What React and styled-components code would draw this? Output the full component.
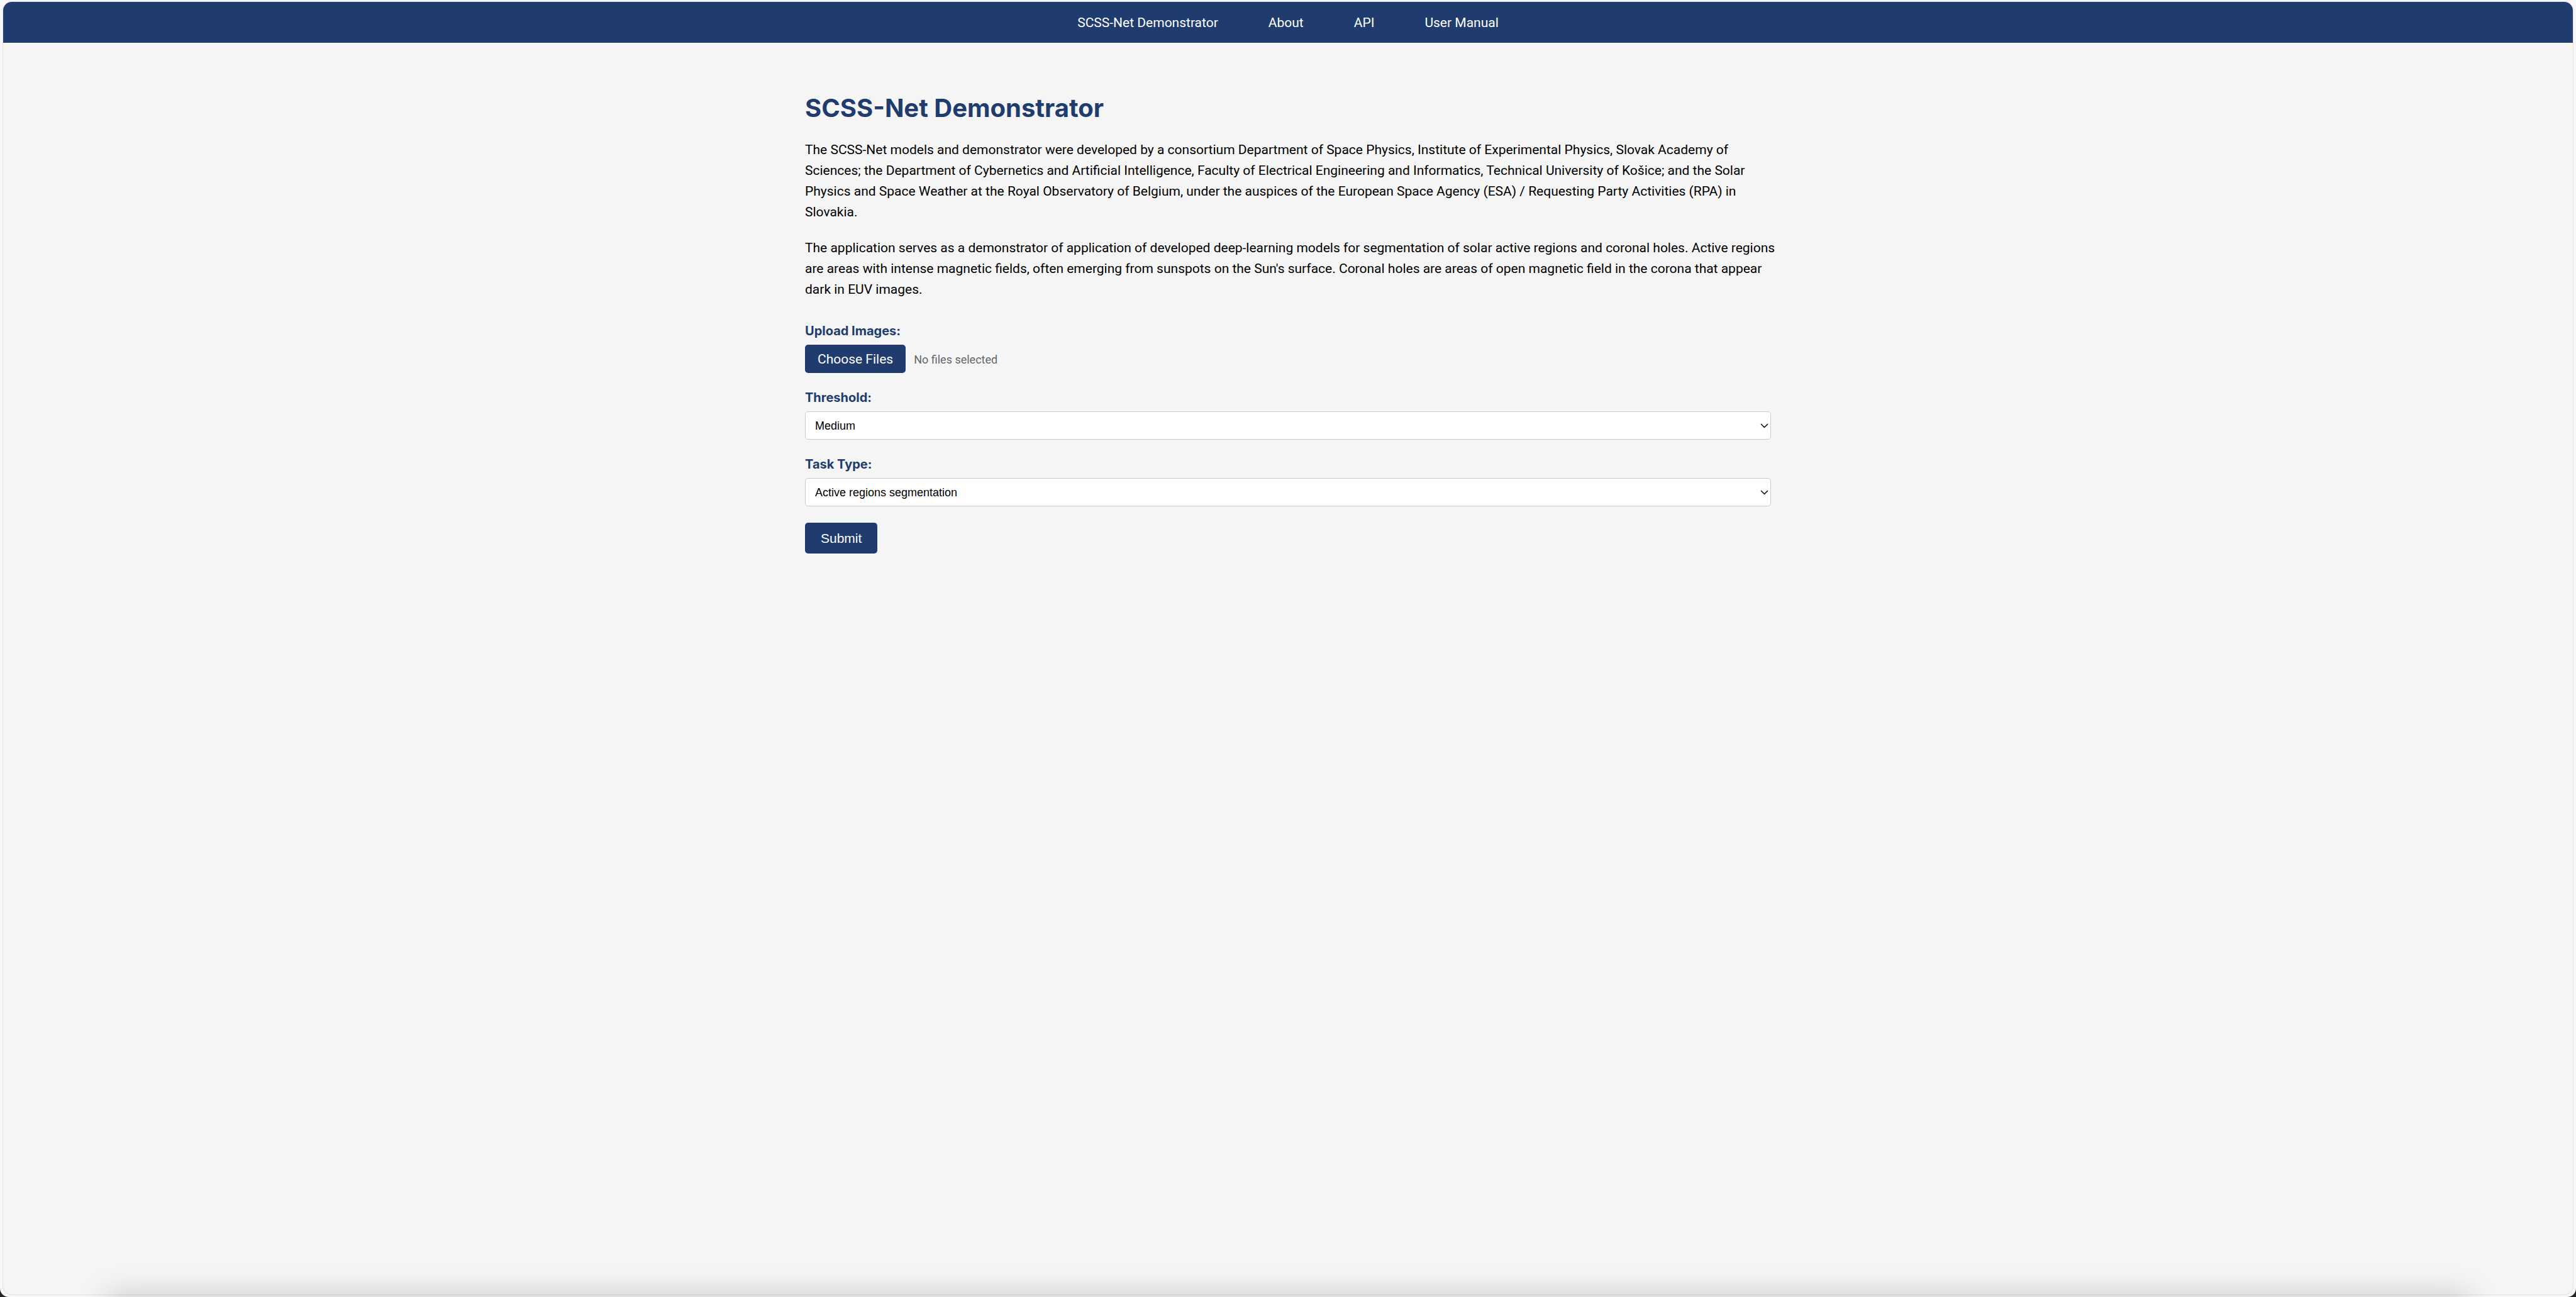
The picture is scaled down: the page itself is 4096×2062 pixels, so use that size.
import React, { useRef, useState } from "react";
import styled, { createGlobalStyle } from "styled-components";

const navy = "#203c6e";
const ui = '"Inter", "Liberation Sans", sans-serif';
const reading = 'Roboto, "Liberation Sans", sans-serif';
const control = '"Liberation Sans", Arial, sans-serif';

const GlobalStyle = createGlobalStyle`
  *, *::before, *::after { box-sizing: border-box; }
  body {
    margin: 0;
    background: #23291f;
    color: #000;
    font: 20px/33px ${ui};
  }
`;

const Frame = styled.div`
  display: flex;
  min-height: 100vh;
  padding: 3px 5px 4px;
  background: #f8f8f8;
  border-radius: 0 0 14px 14px;
  position: relative;
  overflow: hidden;
`;

const Page = styled.div`
  flex: 1;
  background: #f5f5f5;
  border-radius: 14px;
  box-shadow: 0 0 2px rgba(0, 0, 0, 0.28);
  overflow: hidden;
`;

const Nav = styled.nav`
  display: flex;
  justify-content: center;
  gap: 80px;
  padding: 17px 16px 15px;
  background: ${navy};
  font: 21px/33px ${reading};
`;

const NavLink = styled.a`
  color: #fff;
  text-decoration: none;
`;

const Main = styled.main`
  width: 37.5vw;
  margin: 0 auto;
  padding-top: 78px;
`;

const Title = styled.h1`
  margin: 0 0 24px;
  color: ${navy};
  font-size: 40px;
  line-height: 52px;
  font-weight: 700;
`;

const Paragraph = styled.p`
  margin: 0 -10px 24px 0;
  font: 21px/33px ${reading};
`;

const Form = styled.form`
  display: flex;
  flex-direction: column;
  align-items: stretch;
  gap: 26px;
  padding-top: 12px;
`;

const Field = styled.div`
  display: flex;
  flex-direction: column;
`;

const Label = styled.label`
  color: ${navy};
  font-weight: 700;
  margin-bottom: 8px;
  line-height: 27px;
`;

const FileRow = styled.div`
  display: flex;
  align-items: center;
  gap: 13px;
`;

const HiddenFile = styled.input`
  display: none;
`;

const Button = styled.button`
  align-self: flex-start;
  padding: ${(p) => (p.$large ? "13px 25px" : "12px 20px 10px")};
  border: 0;
  border-radius: 5px;
  background: ${navy};
  color: #fff;
  font: 21px/23px ${(p) => (p.$large ? control : reading)};
  cursor: pointer;
`;

const FileStatus = styled.span`
  padding-top: 2px;
  color: #666;
  font: 18px/33px ${reading};
`;

const SelectBox = styled.div`
  display: grid;
  position: relative;
`;

const Select = styled.select`
  appearance: none;
  width: 100%;
  height: 45px;
  padding: 0 15px;
  border: 1px solid #ccc;
  border-radius: 5px;
  background: #fff;
  color: #000;
  font: 18px/20px ${control};
`;

const Chevron = styled.svg`
  position: absolute;
  right: 4px;
  top: 19px;
  width: 13px;
  height: 8px;
  pointer-events: none;
`;

const DockShadow = styled.div`
  position: absolute;
  left: 170px;
  right: 170px;
  bottom: -40px;
  height: 40px;
  box-shadow: 0 0 48px rgba(0, 0, 0, 0.22);
  pointer-events: none;
`;

function SelectField({ id, label, options }) {
  return (
    <Field>
      <Label htmlFor={id}>{label}</Label>
      <SelectBox>
        <Select id={id}>
          {options.map((o) => (
            <option key={o}>{o}</option>
          ))}
        </Select>
        <Chevron viewBox="0 0 13 8" aria-hidden="true">
          <path d="M1 1 L6.5 6.4 L12 1" fill="none" stroke="#111" strokeWidth="1.5" />
        </Chevron>
      </SelectBox>
    </Field>
  );
}

export default function App() {
  const picker = useRef(null);
  const [count, setCount] = useState(0);
  return (
    <>
      <GlobalStyle />
      <Frame>
        <Page>
          <Nav>
            <NavLink href="#home">SCSS-Net Demonstrator</NavLink>
            <NavLink href="#about">About</NavLink>
            <NavLink href="#api">API</NavLink>
            <NavLink href="#manual">User Manual</NavLink>
          </Nav>
          <Main>
            <Title>SCSS-Net Demonstrator</Title>
            <Paragraph>
              The SCSS-Net models and demonstrator were developed by a consortium Department of Space Physics, Institute
              of Experimental Physics, Slovak Academy of Sciences; the Department of Cybernetics and Artificial
              Intelligence, Faculty of Electrical Engineering and Informatics, Technical University of Košice; and the
              Solar Physics and Space Weather at the Royal Observatory of Belgium, under the auspices of the European
              Space Agency (ESA) / Requesting Party Activities (RPA) in Slovakia.
            </Paragraph>
            <Paragraph>
              The application serves as a demonstrator of application of developed deep-learning models for segmentation
              of solar active regions and coronal holes. Active regions are areas with intense magnetic fields, often
              emerging from sunspots on the Sun's surface. Coronal holes are areas of open magnetic field in the corona
              that appear dark in EUV images.
            </Paragraph>
            <Form onSubmit={(e) => e.preventDefault()}>
              <Field>
                <Label htmlFor="images">Upload Images:</Label>
                <FileRow>
                  <HiddenFile
                    id="images"
                    type="file"
                    multiple
                    ref={picker}
                    onChange={(e) => setCount(e.target.files.length)}
                  />
                  <Button type="button" onClick={() => picker.current.click()}>
                    Choose Files
                  </Button>
                  <FileStatus>{count ? `${count} files selected` : "No files selected"}</FileStatus>
                </FileRow>
              </Field>
              <SelectField id="threshold" label="Threshold:" options={["Medium", "Low", "High"]} />
              <SelectField
                id="task"
                label="Task Type:"
                options={["Active regions segmentation", "Coronal holes segmentation"]}
              />
              <Button type="submit" $large>
                Submit
              </Button>
            </Form>
          </Main>
        </Page>
        <DockShadow />
      </Frame>
    </>
  );
}
